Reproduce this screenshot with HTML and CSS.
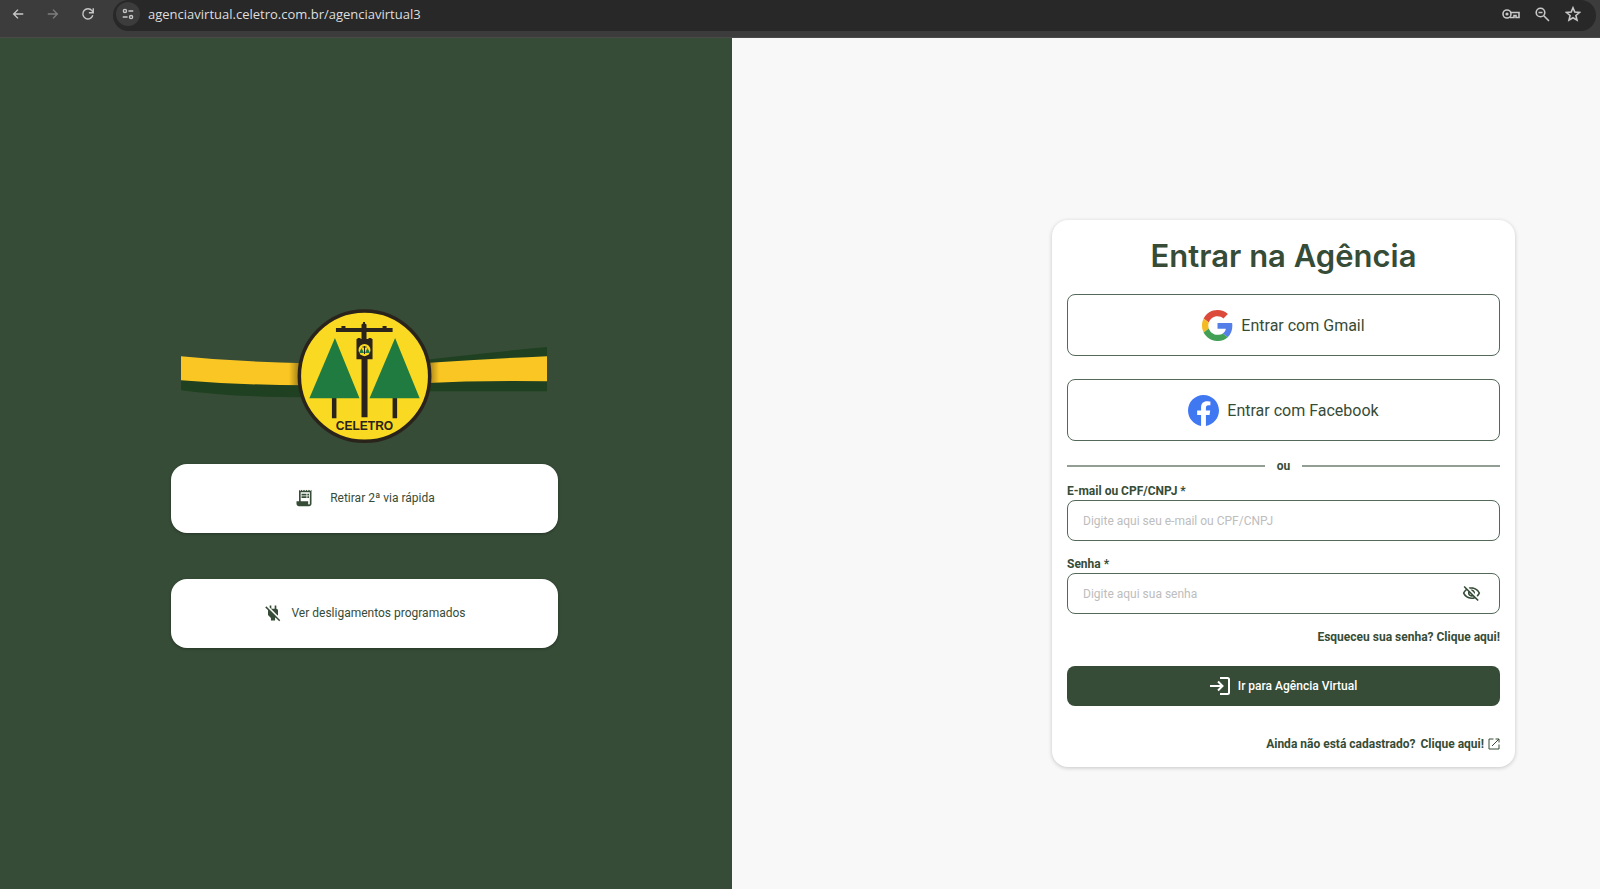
FILE: index.html
```html
<!DOCTYPE html>
<html lang="pt-BR">
<head>
  <meta charset="UTF-8">
  <meta name="viewport" content="width=device-width, initial-scale=1">
  <title>Agência Virtual</title>
  <link rel="stylesheet" href="styles.css">
</head>
<body>

  <header class="toolbar">
    <button class="nav-btn" aria-label="Voltar">
      <svg viewBox="0 0 16 16"><path d="M14 8H3M8 3L3 8l5 5"/></svg>
    </button>
    <button class="nav-btn off" aria-label="Avançar">
      <svg viewBox="0 0 16 16"><path d="M2 8h11M8 3l5 5-5 5"/></svg>
    </button>
    <button class="nav-btn" aria-label="Recarregar">
      <svg viewBox="0 0 16 16"><path d="M13.500 9.500A5.800 5.800 0 1 1 12.500 4.200L14 6M14 1.500v5H9"/></svg>
    </button>
    <div class="omnibox">
      <button class="site-info" aria-label="Informações do site">
        <svg viewBox="0 0 16 16"><circle cx="4.500" cy="4.500" r="1.800"/><path d="M8.500 4.500H14M2 11.500h5.500"/><circle cx="11.500" cy="11.500" r="1.800"/></svg>
      </button>
      <input class="url" type="text" aria-label="Endereço" value="agenciavirtual.celetro.com.br/agenciavirtual3">
      <button class="tool-btn" aria-label="Senhas">
        <svg class="key" viewBox="0 0 18 14"><circle cx="5" cy="7" r="4"/><circle class="dot" cx="5" cy="7" r="1.600"/><path d="M8.500 5.500H17V10.500h-3V8.500h-2V10.500H8"/></svg>
      </button>
      <button class="tool-btn" aria-label="Zoom">
        <svg viewBox="0 0 16 16"><circle cx="6.500" cy="6.500" r="4.300"/><path d="M9.800 9.800L15 15M4.500 6.500h4"/></svg>
      </button>
      <button class="tool-btn" aria-label="Favoritar">
        <svg viewBox="0 0 16 16"><path d="M8 1.800l1.800 4.300 4.700.4-3.600 3 1.100 4.600L8 11.700l-4 2.400 1.100-4.600-3.600-3 4.700-.4z"/></svg>
      </button>
    </div>
  </header>

  <main class="page">
    <section class="left">
      <div class="left-content">
        <svg class="logo" viewBox="0 0 366 136" role="img" aria-label="Celetro">
          <defs>
            <linearGradient id="fita" x1="0" x2="1" y1="0" y2="0">
              <stop offset="0" stop-color="#f9c623"/>
              <stop offset=".295" stop-color="#f9c623"/>
              <stop offset=".325" stop-color="#9c7a1c"/>
              <stop offset=".675" stop-color="#9c7a1c"/>
              <stop offset=".705" stop-color="#f9c623"/>
              <stop offset="1" stop-color="#f9c623"/>
            </linearGradient>
          </defs>
          <path fill="#1f4021" d="M0 68Q60 73 125 73V88Q50 88 0 81z"/>
          <path fill="#1f4021" d="M240 51Q310 43 365 38V82H240z"/>
          <path fill="url(#fita)" d="M0 47Q60 53 125 54H240Q300 50 365 47V72Q300 71 240 74L200 76H125Q60 76 0 71z"/>
          <circle cx="183" cy="67" r="65" fill="#fad922" stroke="#29231c" stroke-width="3.500"/>
          <g fill="#29231c">
            <path d="M154.500 19H160v-2h4v2h16v-3.500l1.500-1V13h2v1.500l1.500 1V19h16v-2h4v2h6v4H185v7h2v-1h3v1h1v20h-5v58h-6V50h-5V30h1v-1h3v1h1v-7h-25.500z"/>
            <path d="M150.500 88h4.500v21h-4.500zM211 88h4.500v21H211z"/>
          </g>
          <path fill="#1f7b3f" d="M153.500 29L178 89h-50zM213.500 29L238 89h-50z"/>
          <circle cx="183" cy="41" r="6" fill="#fad922"/>
          <path fill="#1f7b3f" d="M180 39l2.500 5h-5zM186 39l2.500 5h-5z"/>
          <path fill="#29231c" d="M182.500 37h1v8h-1zM181 37.500h4v1h-4z"/>
          <text class="logo-text" x="183" y="121">CELETRO</text>
        </svg>

        <button class="quick quick-via">
          <svg viewBox="0 0 24 24"><path d="M19.500 3.500L18 2l-1.500 1.500L15 2l-1.500 1.500L12 2l-1.500 1.500L9 2 7.500 3.500 6 2v14H3v3c0 1.660 1.340 3 3 3h12c1.660 0 3-1.340 3-3V2l-1.500 1.500zM19 19c0 .55-.45 1-1 1s-1-.45-1-1v-3H8V5h11v14zM9 7h6v2H9zM16 7h2v2h-2zM9 10h6v2H9zM16 10h2v2h-2z"/></svg>
          <span>Retirar 2ª via rápida</span>
        </button>
        <button class="quick">
          <svg viewBox="0 0 24 24"><path d="M18 14.490V9c0-1-1.010-2.010-2-2V3h-2v4h-4V3H8v2.480l9.510 9.500.49-.49zm-1.760 1.770L7.200 7.200l-.01.01L3.980 4 2.710 5.250l3.360 3.360C6.040 8.740 6 8.870 6 9v5.480L9.500 18v3h5v-3l.48-.48L19.450 22l1.260-1.280-4.470-4.460z"/></svg>
          <span>Ver desligamentos programados</span>
        </button>
      </div>
    </section>

    <section class="right">
      <form class="card">
        <h1>Entrar na Agência</h1>

        <button type="button" class="social">
          <svg viewBox="2 2 44 44">
            <path fill="#dc4a3c" d="M24 9.500c3.540 0 6.710 1.220 9.210 3.600l6.850-6.850C35.900 2.380 30.470 0 24 0 14.620 0 6.510 5.380 2.560 13.220l7.980 6.190C12.430 13.720 17.740 9.500 24 9.500z" transform="translate(2 2) scale(.917)"/>
            <path fill="#557fe8" d="M46.980 24.550c0-1.570-.15-3.090-.38-4.550H24v9.020h12.940c-.58 2.960-2.260 5.480-4.780 7.180l7.730 6c4.510-4.180 7.090-10.360 7.090-17.650z" transform="translate(2 2) scale(.917)"/>
            <path fill="#f4bb25" d="M10.530 28.590c-.48-1.450-.76-2.990-.76-4.590s.27-3.140.76-4.590l-7.980-6.190C.92 16.460 0 20.120 0 24c0 3.880.92 7.540 2.560 10.780l7.970-6.190z" transform="translate(2 2) scale(.917)"/>
            <path fill="#41a056" d="M24 48c6.480 0 11.930-2.130 15.890-5.810l-7.730-6c-2.150 1.450-4.920 2.300-8.160 2.300-6.260 0-11.570-4.220-13.470-9.910l-7.980 6.190C6.510 42.620 14.620 48 24 48z" transform="translate(2 2) scale(.917)"/>
          </svg>
          <span>Entrar com Gmail</span>
        </button>

        <button type="button" class="social">
          <svg viewBox="0 0 24 24"><path fill="#4078f2" d="M24 12.073c0-6.627-5.373-12-12-12s-12 5.373-12 12c0 5.990 4.388 10.954 10.125 11.854v-8.385H7.078v-3.470h3.047V9.430c0-3.007 1.792-4.669 4.533-4.669 1.312 0 2.686.235 2.686.235v2.953H15.830c-1.491 0-1.956.925-1.956 1.874v2.250h3.328l-.532 3.470h-2.796v8.385C19.612 23.027 24 18.062 24 12.073z"/></svg>
          <span>Entrar com Facebook</span>
        </button>

        <div class="divider">ou</div>

        <label for="usuario">E-mail ou CPF/CNPJ *</label>
        <div class="field">
          <input id="usuario" type="text" placeholder="Digite aqui seu e-mail ou CPF/CNPJ">
        </div>

        <label for="senha">Senha *</label>
        <div class="field">
          <input id="senha" type="password" placeholder="Digite aqui sua senha">
          <button type="button" class="eye" aria-label="Mostrar senha">
            <svg viewBox="0 0 24 24"><path d="M12 6c3.790 0 7.170 2.130 8.820 5.500-.59 1.220-1.420 2.270-2.410 3.120l1.410 1.410c1.390-1.230 2.490-2.770 3.180-4.530C21.270 7.110 17 4 12 4c-1.270 0-2.490.2-3.640.57l1.650 1.650C10.660 6.090 11.320 6 12 6zm-1.070 1.140L13 9.210c.57.25 1.030.71 1.280 1.280l2.070 2.070c.08-.34.14-.7.14-1.070C16.500 9.010 14.480 7 12 7c-.37 0-.72.05-1.070.14zM2.010 3.870l2.680 2.680C3.060 7.830 1.770 9.530 1 11.500 2.730 15.890 7 19 12 19c1.520 0 2.980-.29 4.320-.82l3.420 3.420 1.410-1.410L3.420 2.450 2.010 3.870zm7.500 7.500l2.610 2.610c-.04.01-.08.02-.12.02-1.380 0-2.500-1.120-2.500-2.500 0-.05.01-.08.01-.13zm-3.400-3.400l1.750 1.750c-.23.55-.36 1.150-.36 1.780 0 2.480 2.020 4.500 4.500 4.500.63 0 1.230-.13 1.770-.36l.98.98c-.88.24-1.800.38-2.750.38-3.790 0-7.170-2.130-8.820-5.500.7-1.430 1.720-2.610 2.930-3.530z"/></svg>
          </button>
        </div>

        <a class="forgot" href="#">Esqueceu sua senha? Clique aqui!</a>

        <button type="button" class="submit">
          <svg viewBox="0 0 20 20"><path d="M0 10h12M8 5.500l4.500 4.500L8 14.500M10 2h7.500Q19 2 19 3.500v13q0 1.500-1.500 1.500H10"/></svg>
          <span>Ir para Agência Virtual</span>
        </button>

        <p class="register">
          <span>Ainda não está cadastrado?</span>
          <a href="#">Clique aqui!
            <svg viewBox="0 0 12 12"><path d="M5.500 1H1v10h10V6.500M7.500 1H11v3.500M11 1L4 8"/></svg>
          </a>
        </p>
      </form>
    </section>
  </main>

</body>
</html>
```
FILE: styles.css
```css
* {
  box-sizing: border-box;
}

body {
  margin: 0;
  min-height: 100vh;
  display: flex;
  flex-direction: column;
  font-family: Roboto, sans-serif;
  font-size: 12px;
  color: #364c37;
  background-color: #f8f8f8;
}

button {
  font: inherit;
  color: inherit;
  cursor: pointer;
}

a {
  color: inherit;
  text-decoration: none;
}

/* barra do navegador */
.toolbar {
  display: flex;
  align-items: flex-start;
  height: 38px;
  padding: 0 4px 0 8px;
  background-color: #3c3c3c;
  border-bottom: 1px solid #4a4a4a;
}

.toolbar button {
  display: flex;
  align-items: center;
  justify-content: center;
  padding: 0;
  border: none;
  background: none;
}

.toolbar svg {
  width: 16px;
  height: 16px;
  fill: none;
  stroke: #c7c7c7;
  stroke-width: 1.6;
}

.toolbar .nav-btn {
  width: 20px;
  height: 28px;
  margin-right: 15px;
}

.toolbar .nav-btn svg {
  width: 14px;
  height: 14px;
}

.toolbar .off svg {
  stroke: #7d7d7d;
}

.omnibox {
  flex: 1;
  display: flex;
  align-items: center;
  height: 31px;
  padding: 0 14px 3px 3px;
  background-color: #282828;
  border-radius: 16px;
}

.toolbar .site-info {
  width: 24px;
  height: 24px;
  border-radius: 50%;
  background-color: #3c3c3c;
}

.toolbar .site-info svg {
  width: 14px;
  height: 14px;
}

.url {
  flex: 1;
  margin-left: 8px;
  padding: 0;
  border: none;
  outline: none;
  background: none;
  color: #dedede;
  font-family: "Open Sans", sans-serif;
  font-size: 13px;
}

.toolbar .tool-btn {
  width: 18px;
  height: 24px;
  margin-left: 13px;
}

.toolbar .key {
  width: 18px;
  height: 14px;
}

.toolbar .key .dot {
  fill: #c7c7c7;
  stroke: none;
}

/* página */
.page {
  flex: 1;
  display: flex;
}

.left,
.right {
  display: flex;
  align-items: center;
}

.left {
  width: 45.75%;
  justify-content: center;
  padding: 30px 3px 0 0;
  background-color: #364c37;
}

.left-content {
  display: flex;
  flex-direction: column;
  align-items: center;
  width: 53%;
}

.logo {
  width: 95%;
  margin-bottom: 18px;
}

.logo-text {
  font-family: "Liberation Sans", Arial, sans-serif;
  font-size: 12px;
  font-weight: bold;
  text-anchor: middle;
  fill: #29231c;
}

.quick {
  display: flex;
  align-items: center;
  justify-content: center;
  gap: 8px;
  width: 100%;
  height: 69px;
  border: none;
  border-radius: 16px;
  background-color: #fff;
  box-shadow: 0 1px 3px rgba(0, 0, 0, 0.3);
}

.quick svg {
  width: 20px;
  height: 20px;
  fill: #364c37;
}

.quick-via {
  gap: 16px;
  margin-bottom: 46px;
}

.right {
  flex: 1;
  justify-content: flex-end;
  padding: 60px 85px 0 0;
}

.card {
  display: flex;
  flex-direction: column;
  width: 463px;
  padding: 16px 15px 15px;
  background-color: #fff;
  border-radius: 16px;
  box-shadow: 0 1px 4px rgba(0, 0, 0, 0.2);
}

.card h1 {
  margin: 0 0 18px;
  font-family: Inter, sans-serif;
  font-size: 31px;
  font-weight: 600;
  line-height: 40px;
  text-align: center;
}

.social {
  display: flex;
  align-items: center;
  justify-content: center;
  gap: 8px;
  height: 62px;
  margin-bottom: 23px;
  border: 1px solid #55695a;
  border-radius: 8px;
  background-color: #fff;
  font-size: 16px;
}

.social svg {
  width: 31px;
  height: 31px;
}

.divider {
  display: flex;
  align-items: center;
  gap: 12px;
  margin: -6px 0 9px;
  font-weight: 700;
  line-height: 16px;
}

.divider::before,
.divider::after {
  content: "";
  flex: 1;
  height: 2px;
  background-color: #929d93;
}

.card label {
  font-weight: 700;
  line-height: 16px;
  margin-bottom: 1px;
}

.field {
  display: flex;
  align-items: center;
  height: 41px;
  margin-bottom: 15px;
  padding: 0 18px 0 15px;
  border: 1px solid #55695a;
  border-radius: 8px;
}

.field input {
  flex: 1;
  padding: 0;
  border: none;
  outline: none;
  background: none;
  font: inherit;
  color: inherit;
}

.field input::placeholder {
  color: #bdbdbd;
}

.eye {
  display: flex;
  padding: 0;
  border: none;
  background: none;
}

.eye svg {
  width: 19px;
  height: 19px;
  fill: #364c37;
}

.forgot {
  align-self: flex-end;
  margin-bottom: 21px;
  font-weight: 700;
  line-height: 16px;
}

.submit {
  display: flex;
  align-items: center;
  justify-content: center;
  gap: 8px;
  height: 40px;
  border: none;
  border-radius: 8px;
  background-color: #364c37;
}

.card .submit {
  color: #fff;
  font-weight: 500;
}

.submit svg {
  width: 20px;
  height: 20px;
  fill: none;
  stroke: #fff;
  stroke-width: 2;
}

.register {
  display: flex;
  justify-content: flex-end;
  gap: 5px;
  margin: 30px 0 0;
  font-weight: 700;
  line-height: 16px;
}

.register a {
  display: flex;
  align-items: center;
  gap: 4px;
}

.register svg {
  width: 12px;
  height: 12px;
  fill: none;
  stroke: #364c37;
}
```
